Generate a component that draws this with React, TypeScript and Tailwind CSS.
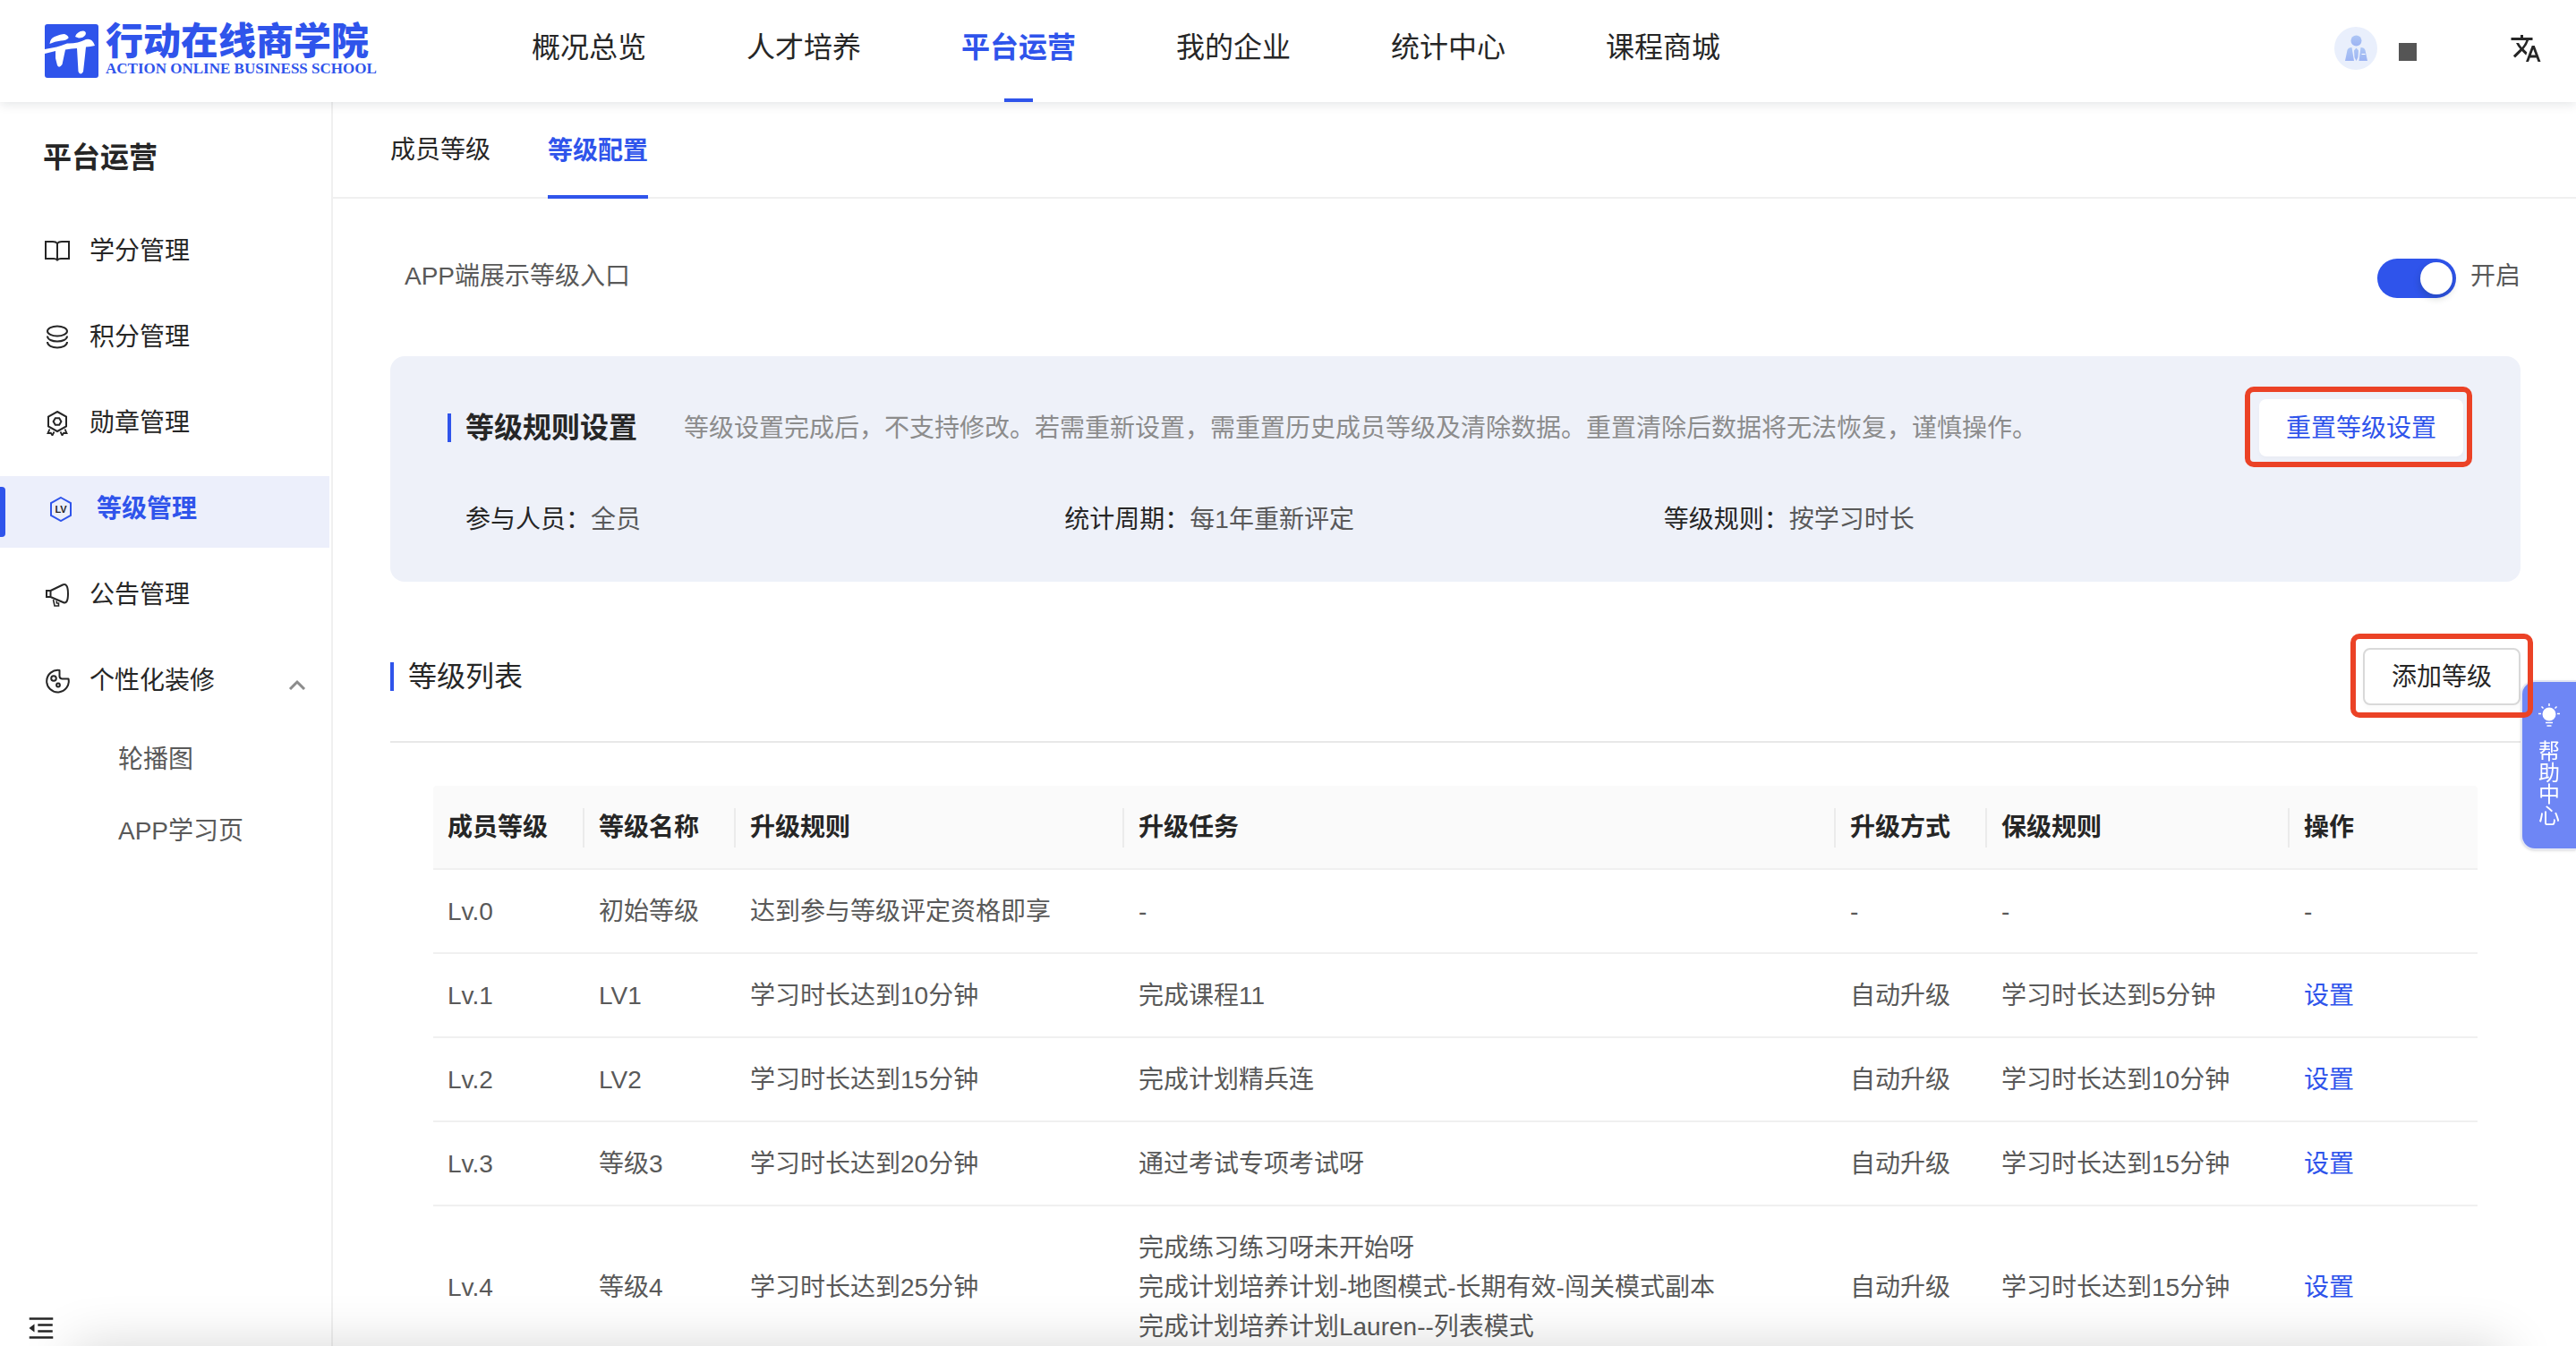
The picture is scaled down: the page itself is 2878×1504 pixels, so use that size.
import { useState } from "react";
import type { ReactNode } from "react";
import { AiOutlineMenuFold } from "react-icons/ai";
import { MdTranslate } from "react-icons/md";

const navItems = ["概况总览", "人才培养", "平台运营", "我的企业", "统计中心", "课程商城"];

const ruleItems = [
  { label: "参与人员：", value: "全员" },
  { label: "统计周期：", value: "每1年重新评定" },
  { label: "等级规则：", value: "按学习时长" },
];

interface Level {
  level: string;
  name: string;
  rule: string;
  tasks: string[];
  mode: string;
  keep: string;
  editable: boolean;
}

const levels: Level[] = [
  { level: "Lv.0", name: "初始等级", rule: "达到参与等级评定资格即享", tasks: ["-"], mode: "-", keep: "-", editable: false },
  { level: "Lv.1", name: "LV1", rule: "学习时长达到10分钟", tasks: ["完成课程11"], mode: "自动升级", keep: "学习时长达到5分钟", editable: true },
  { level: "Lv.2", name: "LV2", rule: "学习时长达到15分钟", tasks: ["完成计划精兵连"], mode: "自动升级", keep: "学习时长达到10分钟", editable: true },
  { level: "Lv.3", name: "等级3", rule: "学习时长达到20分钟", tasks: ["通过考试专项考试呀"], mode: "自动升级", keep: "学习时长达到15分钟", editable: true },
  {
    level: "Lv.4",
    name: "等级4",
    rule: "学习时长达到25分钟",
    tasks: ["完成练习练习呀未开始呀", "完成计划培养计划-地图模式-长期有效-闯关模式副本", "完成计划培养计划Lauren--列表模式"],
    mode: "自动升级",
    keep: "学习时长达到15分钟",
    editable: true,
  },
];

const columns = [
  { title: "成员等级", width: "w-[169px]" },
  { title: "等级名称", width: "w-[169px]" },
  { title: "升级规则", width: "w-[19%]" },
  { title: "升级任务", width: "" },
  { title: "升级方式", width: "w-[169px]" },
  { title: "保级规则", width: "w-[338px]" },
  { title: "操作", width: "w-[210px]" },
];

function Icon({ children }: { children: ReactNode }) {
  return (
    <svg viewBox="0 0 28 28" className="size-7 shrink-0" fill="none" stroke="currentColor" strokeWidth="2" aria-hidden="true">
      {children}
    </svg>
  );
}

const BookIcon = () => (
  <Icon>
    <path d="M1 3H9Q12.500 3 14 5Q15.500 3 19 3H27V22H18Q15.500 22 14 23.500Q12.500 22 10 22H1ZM14 5V23" />
  </Icon>
);

const CoinsIcon = () => (
  <Icon>
    <ellipse cx="14" cy="7" rx="11" ry="5.500" />
    <path d="M3 12.500C3 20.500 25 20.500 25 12.500M3 19C3 27.500 25 27.500 25 19" />
  </Icon>
);

const MedalIcon = () => (
  <Icon>
    <path d="M14 1L24 6.500V17.500L14 23L4 17.500V6.500Z" />
    <path d="M11.800 8.200H16.200L18.400 12L16.200 15.800H11.800L9.600 12Z" />
    <path d="M5.500 20.500L3.500 25L6.800 24.800L8.500 27.500L10.500 23.500M22.500 20.500L24.500 25L21.200 24.800L19.500 27.500L17.500 23.500" strokeWidth="1.800" />
  </Icon>
);

const LevelIcon = () => (
  <Icon>
    <path d="M14 1L25 7.200V20.800L14 27L3 20.800V7.200Z" />
    <text x="14" y="18" textAnchor="middle" fontSize="11" fontWeight="700" fill="#262626" stroke="none">
      LV
    </text>
  </Icon>
);

const HornIcon = () => (
  <Icon>
    <path d="M2 9H6.500V16H2ZM6.500 9L20 2.500Q26 0 26 12.500Q26 24.500 20.500 22L6.500 16" />
    <path d="M9.500 19L11 26H15.500V23H13.500L13 20.500" strokeWidth="1.600" />
  </Icon>
);

const CookieIcon = () => (
  <Icon>
    <path d="M16.500 2V9Q17 11.500 19.500 11.500H26.500A12.300 12.300 0 1 1 16.500 2Z" strokeLinejoin="round" />
    <circle cx="10" cy="11" r="2.800" />
    <circle cx="15" cy="18.500" r="1.900" />
  </Icon>
);

const menuItems = [
  { label: "学分管理", icon: <BookIcon /> },
  { label: "积分管理", icon: <CoinsIcon /> },
  { label: "勋章管理", icon: <MedalIcon /> },
  { label: "等级管理", icon: <LevelIcon />, active: true },
  { label: "公告管理", icon: <HornIcon /> },
];

function Logo() {
  return (
    <a href="#" className="flex w-[544px] shrink-0 items-center gap-2 text-[#2f54eb]">
      <svg viewBox="0 0 60 60" className="size-15" aria-hidden="true">
        <rect width="60" height="60" rx="3" fill="#2f54eb" />
        <path
          fill="#fff"
          d="M5.500 22Q6 16 11 14Q18 11 22 11Q27 13 26.500 15.500Q24 18.500 18 18.500Q11 19 5.500 22ZM34 14Q36 8 43 7.500Q47 8 45.500 12Q43 15.500 38 15.500ZM0 28Q14 26 25 21.500Q36 22 46 17Q53 15 56 24Q51 25 46 25.500L45 35L43 53Q40 58 37.500 53L36 27Q30 27 23 28.500L19.500 45Q16 50 14 46L12 38L12 30L0 33Z"
        />
      </svg>
      <span className="flex flex-col">
        <span className="text-[42px] leading-10 font-black">行动在线商学院</span>
        <span className="font-['Liberation_Serif',serif] text-[17px] leading-5 font-bold whitespace-nowrap">ACTION ONLINE BUSINESS SCHOOL</span>
      </span>
    </a>
  );
}

function Header() {
  return (
    <header className="relative z-10 flex h-[114px] shrink-0 bg-white pr-[38px] pl-[50px] shadow-[0_2px_12px_rgba(0,21,41,0.12)]">
      <Logo />
      <nav className="flex gap-28">
        {navItems.map((item) =>
          item === "平台运营" ? (
            <a key={item} href="#" className="relative flex items-center pb-2 text-[32px] font-bold text-[#2f54eb]">
              {item}
              <span className="absolute bottom-0 left-1/2 h-1 w-8 -translate-x-1/2 bg-[#2f54eb]" />
            </a>
          ) : (
            <a key={item} href="#" className="flex items-center pb-2 text-[32px]">
              {item}
            </a>
          ),
        )}
      </nav>
      <div className="ml-auto flex items-center pb-1.5">
        <svg viewBox="0 0 48 48" className="mr-6 size-12" role="img" aria-label="头像">
          <defs>
            <linearGradient id="person" x1="0" y1="0" x2="0" y2="1">
              <stop offset="0" stopColor="#adc6f5" />
              <stop offset="1" stopColor="#9db4f3" />
            </linearGradient>
          </defs>
          <circle cx="24" cy="24" r="24" fill="#e9effc" />
          <circle cx="24.500" cy="15.500" r="6" fill="url(#person)" />
          <path
            fill="url(#person)"
            d="M12 38L14.500 26Q15.500 23 19.500 23L22 38ZM24.500 23.500L27 26.500L26.500 34L24.500 38L22.500 34L22 26.500ZM27.500 38L29.500 23Q33.500 23 34.500 26L37 38Z"
          />
          <path d="M30.500 30.500H34.500" stroke="#fff" strokeWidth="1" />
        </svg>
        <span className="mt-2 mr-26 size-5 bg-[#555]" />
        <button type="button" aria-label="切换语言">
          <MdTranslate className="size-9" />
        </button>
      </div>
    </header>
  );
}

function Sidebar() {
  return (
    <aside className="flex w-[372px] shrink-0 flex-col border-r-2 border-[#f0f0f0] text-[28px]">
      <h2 className="mt-10 pl-12 text-[32px] leading-11 font-bold">平台运营</h2>
      <ul className="mt-[46px] flex flex-col gap-4">
        {menuItems.map((item) => (
          <li key={item.label}>
            {item.active ? (
              <a href="#" className="relative mr-0.5 flex h-20 items-center gap-[26px] bg-[#eceffb] pb-1.5 pl-[54px] font-bold text-[#2f54eb]">
                <span className="absolute top-3 left-0 h-14 w-1.5 rounded-r bg-[#2f54eb]" />
                {item.icon}
                {item.label}
              </a>
            ) : (
              <a href="#" className="flex h-20 items-center gap-[22px] pb-1.5 pl-[50px]">
                {item.icon}
                {item.label}
              </a>
            )}
          </li>
        ))}
        <li>
          <button type="button" className="flex h-20 w-full items-center gap-[22px] pr-7 pb-1.5 pl-[50px]">
            <CookieIcon />
            个性化装修
            <svg viewBox="0 0 20 12" className="mt-2 ml-auto h-3 w-5" fill="none" stroke="#8c8c8c" strokeWidth="3" aria-hidden="true">
              <path d="M2 11L10 3L18 11" />
            </svg>
          </button>
          <ul className="mt-2 text-[#595959]">
            <li>
              <a href="#" className="flex h-20 items-center pb-1.5 pl-[132px]">轮播图</a>
            </li>
            <li>
              <a href="#" className="flex h-20 items-center pb-1.5 pl-[132px]">APP学习页</a>
            </li>
          </ul>
        </li>
      </ul>
      <button type="button" aria-label="收起菜单" className="mt-auto mb-[3px] ml-[29px] self-start">
        <AiOutlineMenuFold className="size-[34px]" />
      </button>
    </aside>
  );
}

// 标注框，叠在按钮外侧
function Highlight({ className }: { className: string }) {
  return <span className={`pointer-events-none absolute z-20 rounded-[10px] border-6 border-[#eb4226] ${className}`} />;
}

function RuleCard() {
  return (
    <section className="mt-[65px] rounded-2xl bg-[#eef1f9] px-16 py-12">
      <div className="flex items-center">
        <h3 className="border-l-4 border-[#2f54eb] pl-4 text-[32px] leading-8 font-bold">等级规则设置</h3>
        <p className="ml-13 pt-0.5 text-[#8c8c8c]">
          等级设置完成后，不支持修改。若需重新设置，需重置历史成员等级及清除数据。重置清除后数据将无法恢复，谨慎操作。
        </p>
        <div className="relative ml-auto shrink-0">
          <button type="button" className="h-16 w-[228px] rounded-lg bg-white pt-0.5 text-[#2f54eb] shadow-[0_4px_4px_rgba(0,0,0,0.02)]">
            重置等级设置
          </button>
          <Highlight className="-top-3.5 -right-2.5 -bottom-3 -left-4" />
        </div>
      </div>
      <dl className="mt-[49px] mr-56 -mb-px ml-5 grid grid-cols-3 leading-11">
        {ruleItems.map((item) => (
          <div key={item.label} className="flex">
            <dt>{item.label}</dt>
            <dd className="text-[#595959]">{item.value}</dd>
          </div>
        ))}
      </dl>
    </section>
  );
}

function LevelTable() {
  return (
    <div className="mx-12 mt-12">
      <table className="w-full table-fixed border-separate border-spacing-0 text-left leading-11">
        <thead>
          <tr>
            {columns.map((col, i) => (
              <th
                key={col.title}
                className={`border-b-2 border-[#f0f0f0] bg-[#fafafa] pt-[25px] pb-[23px] font-bold first:rounded-tl last:rounded-tr ${col.width}`}
              >
                <div className={i < columns.length - 1 ? "border-r-2 border-[#ebebeb] pl-4" : "pl-4"}>{col.title}</div>
              </th>
            ))}
          </tr>
        </thead>
        <tbody className="text-[#595959] [&_td]:border-b-2 [&_td]:border-[#f0f0f0] [&_td]:pt-[25px] [&_td]:pb-[23px] [&_td]:pl-4">
          {levels.map((row) => (
            <tr key={row.level}>
              <td>{row.level}</td>
              <td>{row.name}</td>
              <td>{row.rule}</td>
              <td>
                {row.tasks.map((task) => (
                  <div key={task}>{task}</div>
                ))}
              </td>
              <td>{row.mode}</td>
              <td>{row.keep}</td>
              <td>
                {row.editable ? (
                  <a href="#" className="text-[#2f54eb]">
                    设置
                  </a>
                ) : (
                  "-"
                )}
              </td>
            </tr>
          ))}
        </tbody>
      </table>
    </div>
  );
}

function HelpTab() {
  return (
    <button
      type="button"
      className="fixed top-[760px] right-0 z-10 flex h-[190px] w-[62px] flex-col items-center rounded-l-2xl border-2 border-r-0 border-[#e3e6f2] bg-[#6e86f5] pt-6 text-[24px] leading-6 text-white shadow-sm"
    >
      <svg viewBox="0 0 24 26" className="mb-4 h-[26px] w-6 shrink-0" fill="none" stroke="#fff" strokeWidth="1.500" aria-hidden="true">
        <circle cx="12" cy="12" r="7.500" fill="#fff" stroke="none" />
        <path d="M12 0V3M0 11.500H3M21 11.500H24M3.500 3.500L5.500 5.500M20.500 3.500L18.500 5.500M8 21.500H16M9.500 25H14.500" />
      </svg>
      <span className="w-6">帮助中心</span>
    </button>
  );
}

export default function App() {
  const [enabled, setEnabled] = useState(true);

  return (
    <div className="flex h-screen flex-col overflow-hidden bg-white font-['Liberation_Sans','Noto_Sans_CJK_SC',sans-serif] text-[#262626]">
      <Header />
      <div className="flex min-h-0 flex-1">
        <Sidebar />
        <main className="min-w-0 flex-1 overflow-y-auto text-[28px] [scrollbar-width:none]">
          <nav className="flex h-27 gap-16 border-b-2 border-[#f0f0f0] pl-16">
            <a href="#" className="flex items-center pt-0.5">
              成员等级
            </a>
            <a href="#" className="-mb-0.5 flex items-center border-y-4 border-t-transparent border-b-[#2f54eb] pt-0.5 font-bold text-[#2f54eb]">
              等级配置
            </a>
          </nav>
          <div className="pr-[62px] pl-16">
            <div className="mt-[67px] flex h-11 items-center justify-between pl-4 text-[#595959]">
              <label htmlFor="show-level" className="pb-1">
                APP端展示等级入口
              </label>
              <div className="flex items-center gap-4">
                <input
                  id="show-level"
                  type="checkbox"
                  role="switch"
                  checked={enabled}
                  onChange={(e) => setEnabled(e.target.checked)}
                  className="flex h-11 w-22 appearance-none items-center rounded-full bg-[#bfbfbf] p-1 before:size-9 before:rounded-full before:bg-white before:shadow-[0_4px_8px_rgba(0,35,11,0.2)] checked:justify-end checked:bg-[#2f54eb]"
                />
                <span className="pb-1">{enabled ? "开启" : "关闭"}</span>
              </div>
            </div>
            <RuleCard />
            <section>
              <div className="mt-[74px] flex items-center justify-between border-b-2 border-[#e8e8e8] pb-10">
                <h3 className="border-l-4 border-[#2f54eb] pl-4 text-[32px] leading-8">等级列表</h3>
                <div className="relative">
                  <button type="button" className="h-16 w-44 rounded-lg border-2 border-[#d9d9d9] bg-white pt-0.5 shadow-[0_4px_4px_rgba(0,0,0,0.02)]">
                    添加等级
                  </button>
                  <Highlight className="-inset-x-3.5 -top-4 -bottom-3.5" />
                </div>
              </div>
              <LevelTable />
            </section>
          </div>
        </main>
      </div>
      <HelpTab />
      <div className="pointer-events-none fixed inset-x-20 top-full z-30 h-20 shadow-[0_0_60px_rgba(0,0,0,0.16)]" />
    </div>
  );
}
